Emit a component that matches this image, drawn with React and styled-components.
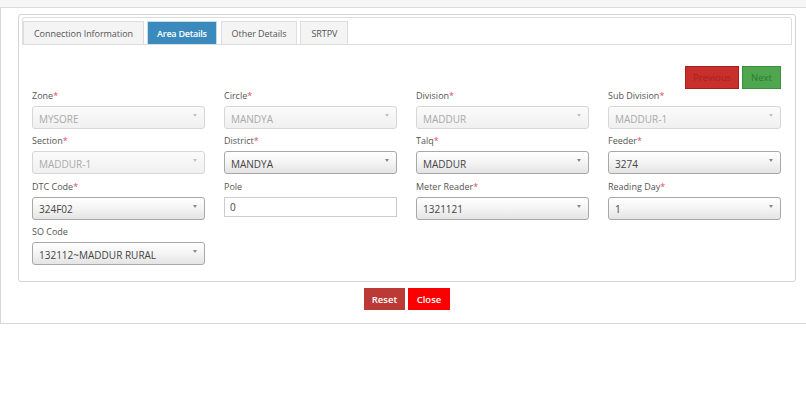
import React from 'react';
import styled, { createGlobalStyle } from 'styled-components';

const GlobalStyle = createGlobalStyle`
  html, body {
    margin: 0;
    padding: 0;
    background: #ffffff;
    font-family: "Open Sans", "Liberation Sans", sans-serif;
  }
`;

const rows = [
  [
    { label: 'Zone', req: true, value: 'MYSORE', disabled: true },
    { label: 'Circle', req: true, value: 'MANDYA', disabled: true },
    { label: 'Division', req: true, value: 'MADDUR', disabled: true },
    { label: 'Sub Division', req: true, value: 'MADDUR-1', disabled: true },
  ],
  [
    { label: 'Section', req: true, value: 'MADDUR-1', disabled: true },
    { label: 'District', req: true, value: 'MANDYA' },
    { label: 'Talq', req: true, value: 'MADDUR' },
    { label: 'Feeder', req: true, value: '3274' },
  ],
  [
    { label: 'DTC Code', req: true, value: '324F02' },
    { label: 'Pole', value: '0', input: true },
    { label: 'Meter Reader', req: true, value: '1321121' },
    { label: 'Reading Day', req: true, value: '1' },
  ],
  [{ label: 'SO Code', value: '132112~MADDUR RURAL' }],
];

const tabs = ['Connection Information', 'Area Details', 'Other Details', 'SRTPV'];

const App = () => {
  return (
    <Page>
      <GlobalStyle />
      <TopBand />
      <OuterPanel>
        <InnerPanel>
          <TabStrip>
            {tabs.map((t) => (
              <Tab key={t} active={t === 'Area Details'}>{t}</Tab>
            ))}
          </TabStrip>
          <Content>
            <NavRow>
              <PrevButton>Previous</PrevButton>
              <NextButton>Next</NextButton>
            </NavRow>
            <Grid>
              {rows.flat().map((f) => (
                <Field key={f.label}>
                  <Label>
                    {f.label}
                    {f.req && <Star>*</Star>}
                  </Label>
                  {f.input ? (
                    <TextInput>{f.value}</TextInput>
                  ) : (
                    <Select disabled={f.disabled}>
                      {f.value}
                      <Arrow disabled={f.disabled} />
                    </Select>
                  )}
                </Field>
              ))}
            </Grid>
          </Content>
        </InnerPanel>
        <Footer>
          <ResetButton>Reset</ResetButton>
          <CloseButton>Close</CloseButton>
        </Footer>
      </OuterPanel>
    </Page>
  );
};

export default App;

const Page = styled.div`
  width: 806px;
  height: 398px;
  overflow: hidden;
  background: #ffffff;
`;

const TopBand = styled.div`
  height: 7px;
  background: #f6f6f6;
  border-bottom: 1px solid #dcdcdc;
`;

const OuterPanel = styled.div`
  border-left: 1px solid #d8d8d8;
  border-bottom: 1px solid #d8d8d8;
  padding: 6px 10px 13px 17px;
`;

const InnerPanel = styled.div`
  border: 1px solid #d4d4d4;
  border-radius: 3px;
  padding: 2px 3px 16px 3px;
`;

const TabStrip = styled.div`
  display: flex;
  align-items: flex-end;
  height: 26px;
  border: 1px solid #dddddd;
  border-radius: 3px 3px 0 0;
`;

const Tab = styled.div`
  height: 23px;
  box-sizing: border-box;
  display: flex;
  align-items: center;
  padding: 0 ${(p) => (p.active ? '9px' : '10px')};
  margin-right: ${(p) => (p.active ? '4px' : '3px')};
  font-size: 9px;
  color: ${(p) => (p.active ? '#ffffff' : '#555555')};
  background: ${(p) => (p.active ? '#3a8abd' : '#f4f4f4')};
  border: 1px solid ${(p) => (p.active ? '#c6dbe8' : '#dddddd')};
  border-bottom: none;
  font-weight: ${(p) => (p.active ? 600 : 400)};
  letter-spacing: ${(p) => (p.active ? '-0.25px' : '-0.05px')};
`;

const Content = styled.div`
  padding: 21px 11px 0 10px;
`;

const NavRow = styled.div`
  display: flex;
  justify-content: flex-end;
  gap: 3px;
  height: 23px;
`;

const NavButton = styled.div`
  height: 23px;
  box-sizing: border-box;
  display: flex;
  align-items: center;
  justify-content: center;
  font-size: 9.5px;
`;

const PrevButton = styled(NavButton)`
  width: 54px;
  background: #c9302c;
  border: 1px solid #a5201d;
  color: #a22420;
`;

const NextButton = styled(NavButton)`
  width: 39px;
  background: #4ea64e;
  border: 1px solid #3d8d3d;
  color: #2e7a2e;
`;

const Grid = styled.div`
  display: grid;
  grid-template-columns: repeat(4, 173px);
  column-gap: 19px;
  row-gap: 5.4px;
`;

const Field = styled.div`
  display: flex;
  flex-direction: column;
`;

const Label = styled.div`
  font-size: 9px;
  line-height: 14px;
  height: 14px;
  color: #555555;
  margin-bottom: 3px;
`;

const Star = styled.span`
  color: #e0505a;
`;

const Select = styled.div`
  position: relative;
  height: 23px;
  box-sizing: border-box;
  border-radius: 3px;
  padding: 2px 6px 0 6px;
  display: flex;
  align-items: center;
  font-size: 10px;
  border: 1px solid ${(p) => (p.disabled ? '#d6d6d6' : '#a8a8a8')};
  color: ${(p) => (p.disabled ? '#aaaaaa' : '#444444')};
  background: ${(p) =>
    p.disabled
      ? 'linear-gradient(#fbfbfb, #f0f0f0)'
      : 'linear-gradient(#ffffff 0%, #f4f4f4 50%, #e4e4e4 100%)'};
`;

const Arrow = styled.span`
  position: absolute;
  right: 7px;
  top: 7px;
  width: 0;
  height: 0;
  border-left: 2px solid transparent;
  border-right: 2px solid transparent;
  border-top: 3px solid ${(p) => (p.disabled ? '#c4c4c4' : '#888888')};
`;

const TextInput = styled.div`
  height: 20px;
  box-sizing: border-box;
  border: 1px solid #cccccc;
  padding: 0 5px;
  display: flex;
  align-items: center;
  font-size: 10px;
  color: #444444;
  background: #ffffff;
`;

const Footer = styled.div`
  display: flex;
  justify-content: center;
  gap: 3px;
  padding-top: 6px;
`;

const FooterButton = styled.div`
  height: 22px;
  width: 41px;
  box-sizing: border-box;
  display: flex;
  align-items: center;
  justify-content: center;
  font-size: 9.5px;
  font-weight: 600;
  color: #ffffff;
`;

const ResetButton = styled(FooterButton)`
  background: #bb3a35;
`;

const CloseButton = styled(FooterButton)`
  width: 42px;
  background: #fb0000;
`;
